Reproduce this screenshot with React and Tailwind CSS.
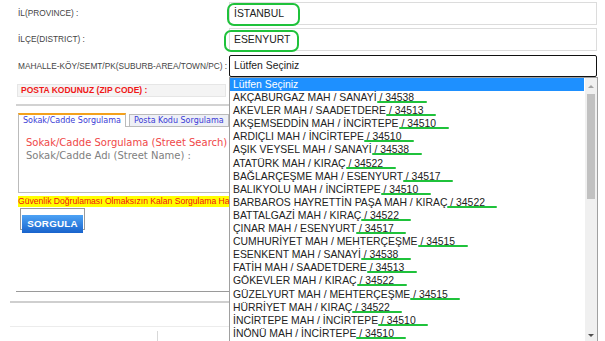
const mahalleler = [
  ['AKÇABURGAZ MAH / SANAYİ', '34538'],
  ['AKEVLER MAH / SAADETDERE', '34513'],
  ['AKŞEMSEDDİN MAH / İNCİRTEPE', '34510'],
  ['ARDIÇLI MAH / İNCİRTEPE', '34510'],
  ['AŞIK VEYSEL MAH / SANAYİ', '34538'],
  ['ATATÜRK MAH / KIRAÇ', '34522'],
  ['BAĞLARÇEŞME MAH / ESENYURT', '34517'],
  ['BALIKYOLU MAH / İNCİRTEPE', '34510'],
  ['BARBAROS HAYRETTİN PAŞA MAH / KIRAÇ', '34522'],
  ['BATTALGAZİ MAH / KIRAÇ', '34522'],
  ['ÇINAR MAH / ESENYURT', '34517'],
  ['CUMHURİYET MAH / MEHTERÇEŞME', '34515'],
  ['ESENKENT MAH / SANAYİ', '34538'],
  ['FATİH MAH / SAADETDERE', '34513'],
  ['GÖKEVLER MAH / KIRAÇ', '34522'],
  ['GÜZELYURT MAH / MEHTERÇEŞME', '34515'],
  ['HÜRRİYET MAH / KIRAÇ', '34522'],
  ['İNCİRTEPE MAH / İNCİRTEPE', '34510'],
  ['İNÖNÜ MAH / İNCİRTEPE', '34510'],
]

const Label = ({ children }) => (
  <div className="w-[211px] shrink-0 text-[8.3px] text-[#444] whitespace-nowrap">{children}</div>
)

export default function App() {
  return (
    <div className="relative w-[605px] h-[341px] overflow-hidden bg-white font-['Liberation_Sans',Arial,sans-serif]">
      {/* form */}
      <div className="pl-[18px] pr-[8px] pt-[2px]">
        <div className="flex items-center h-[23px]">
          <Label>İL(PROVINCE) :</Label>
          <div className="flex-1 h-full flex items-center pl-[4px] border border-[#dcdcdc] text-[10.4px] text-[#222]">İSTANBUL</div>
        </div>
        <div className="flex items-center h-[23px] mt-[3px]">
          <Label>İLÇE(DISTRICT) :</Label>
          <div className="flex-1 h-full flex items-center pl-[4px] border border-[#dcdcdc] text-[10.4px] text-[#222]">ESENYURT</div>
        </div>
        <div className="flex items-center h-[22px] mt-[4px]">
          <Label>MAHALLE-KÖY/SEMT/PK(SUBURB-AREA/TOWN/PC) :</Label>
          <div className="flex-1 h-full flex items-center pl-[4px] border border-[#111] rounded-[2px] text-[10.4px] text-[#222]">Lütfen Seçiniz</div>
        </div>

        <div className="mt-[7px] -ml-[1px] w-[209px] h-[13px] flex items-center pl-[3px] bg-[#f4f4f4] border border-[#e6e6e6] text-[8.5px] font-bold text-[#f01818] whitespace-nowrap">
          POSTA KODUNUZ (ZIP CODE) :
        </div>

        <div className="mt-[7px] -ml-[2px] h-[2px] bg-[#d2d2d2]" />

        {/* tabs */}
        <div className="mt-[7px] flex items-end gap-[3px] font-['DejaVu_Sans',Verdana,sans-serif] text-[8px] text-[#3b3bd6]">
          <div className="h-[14px] px-[4px] flex items-center bg-white border border-[#bbb] border-t-2 border-t-[#f4a11c] border-b-0 -mb-px relative z-10 whitespace-nowrap">
            Sokak/Cadde Sorgulama
          </div>
          <div className="h-[12px] px-[4px] flex items-center bg-[#eef0f6] border border-[#bbb] border-b-0 whitespace-nowrap">
            Posta Kodu Sorgulama
          </div>
        </div>
        <div className="h-[67px] border border-[#bbb] pt-[9px] pl-[7px] font-['DejaVu_Sans',Verdana,sans-serif] text-[10px] leading-[13px] whitespace-nowrap">
          <div className="text-[#f04848]">Sokak/Cadde Sorgulama (Street Search)</div>
          <div className="text-[#808080]">Sokak/Cadde Adı (Street Name) :</div>
        </div>

        <div className="mt-[3px] w-[211px] overflow-hidden">
          <div className="w-fit h-[11px] flex items-center bg-[#ffff00] text-[8.6px] text-[#f01010] whitespace-nowrap">
            Güvenlik Doğrulaması Olmaksızın Kalan Sorgulama Hakkınız : 10
          </div>
        </div>

        <div className="mt-[1px] ml-[2px] w-[65px] h-[22px] border border-[#9a9a9a] p-px">
          <button type="button" className="w-full h-full bg-gradient-to-b from-[#4da3f5] to-[#1863cc] text-white font-bold text-[9.8px] tracking-[0.2px]">
            SORGULA
          </button>
        </div>

        <div className="mt-[61px] -ml-[2px] h-px bg-[#9a9a9a]" />
        <div className="mt-[9px] -ml-[8px] h-[2px] bg-[#cfcfcf]" />
        <div className="mt-[23px] -ml-[8px] h-px bg-[#ececec]" />
        <div className="ml-[139px] mt-[4px] w-px h-[10px] bg-[#d8d8d8]" />
      </div>

      {/* green marker rings */}
      <div className="absolute left-[227px] top-[3px] w-[73px] h-[23px] border-[2.5px] border-[#1fc23b] rounded-[7px]" />
      <div className="absolute left-[224px] top-[30px] w-[75px] h-[22px] border-[2.5px] border-[#1fc23b] rounded-[7px]" />

      {/* open select list */}
      <div className="absolute left-[229px] top-[77px] w-[369px] h-[268px] bg-white border border-[#a0a0a0] overflow-hidden">
        <div className="pr-[13px] text-[10.4px] leading-[13.1px] text-[#222] whitespace-nowrap">
          <div className="h-[13.1px] pl-[3px] bg-[#1e90ff] text-white">Lütfen Seçiniz</div>
          {mahalleler.map(([ad, kod]) => (
            <div key={ad} className="h-[13.1px] pl-[3px]">
              {ad}
              <span className="relative">
                {' / ' + kod}
                <span className="absolute left-0 bottom-0 w-[50px] h-[2px] rounded-full bg-[#1fc23b]" />
              </span>
            </div>
          ))}
        </div>
        <div className="absolute right-0 top-0 bottom-0 w-[12px] bg-[#f0f0f0]">
          <div className="absolute left-[3px] top-[7px] w-0 h-0 border-x-[3px] border-x-transparent border-b-[3px] border-b-[#a3a3a3]" />
          <div className="absolute left-[2px] top-[16px] w-[8px] h-[105px] bg-[#c1c1c1]" />
          <div className="absolute left-[3px] top-[256px] w-0 h-0 border-x-[3px] border-x-transparent border-t-[3px] border-t-[#505050]" />
        </div>
      </div>
    </div>
  )
}
